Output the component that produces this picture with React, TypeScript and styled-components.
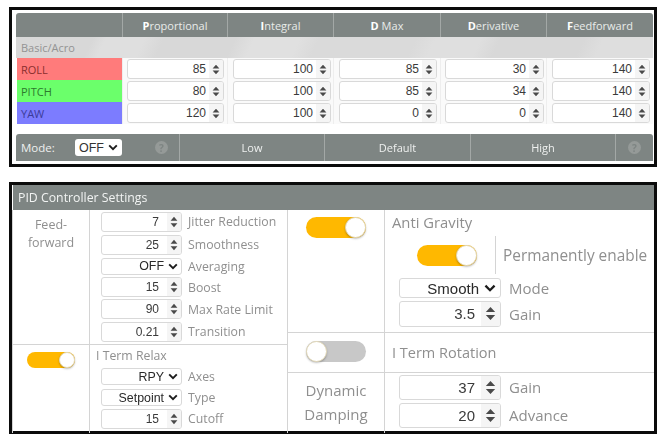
import React from "react";
import styled, { createGlobalStyle } from "styled-components";

const Global = createGlobalStyle`
  html, body { margin: 0; padding: 0; background: #fff; }
  body { width: 666px; height: 440px; overflow: hidden; font-family: "Open Sans", sans-serif; }
`;

const Page = styled.div`
  width: 666px;
  height: 440px;
  padding: 7px 9px 0 9px;
  box-sizing: border-box;
  display: flex;
  flex-direction: column;
  gap: 15px;
  filter: blur(0.3px);
`;

const TopFrame = styled.section`
  width: 648px;
  height: 160px;
  box-sizing: border-box;
  border: 3px solid #0b0b0b;
  padding: 3px 1px 3px 4px;
  background: #fff;
  display: flex;
  flex-direction: column;
`;

const PidGrid = styled.div`
  display: grid;
  grid-template-columns: 106px 105px 106px 107px 106px 107px;
  width: 637px;
  border-radius: 3px 3px 0 0;
  overflow: hidden;
`;

const HeadCell = styled.div`
  height: 24px;
  background: #7e8583;
  color: #e9ecea;
  font-size: 11px;
  display: flex;
  align-items: center;
  justify-content: center;
  border-left: 1px solid #a3a8a6;
  box-sizing: border-box;
  &:first-child { border-left: 0; }
  b { color: #fff; font-weight: 700; }
`;

const HeadRest = styled.span`
  white-space: pre;
`;

const GroupRow = styled.div`
  grid-column: 1 / -1;
  height: 21px;
  box-sizing: border-box;
  padding: 1px 0 0 5px;
  color: #939393;
  font-size: 11px;
  line-height: 19px;
  background: linear-gradient(115deg, #d8d8d8 0 12%, #dfdfdf 14% 20%, #d8d8d8 23% 34%, #e0e0e0 37% 44%, #dadada 47% 62%, #dfdfdf 65% 72%, #d8d8d8 75% 88%, #dedede 91%);
`;

const AxisCell = styled.div<{ $bg: string; $fg: string }>`
  height: 22px;
  margin-left: 1px;
  box-sizing: border-box;
  padding-left: 4px;
  display: flex;
  align-items: center;
  background: ${(p) => p.$bg};
  color: ${(p) => p.$fg};
  font-size: 11px;
`;

const ValueCell = styled.div<{ $l: number; $r: number }>`
  height: 22px;
  box-sizing: border-box;
  padding: 1px ${(p) => p.$r}px 1px ${(p) => p.$l}px;
  display: flex;
  align-items: center;
  border-left: 1px solid #eee;
  background: #fafafa;
`;

const NumberBox = styled.div<{ $h: number; $size: number }>`
  flex: 1;
  height: ${(p) => p.$h}px;
  box-sizing: border-box;
  background: #fff;
  border: 1px solid #d9d9d9;
  border-radius: 3px;
  display: flex;
  align-items: stretch;
  justify-content: flex-end;
  font-family: "Liberation Sans", Arial, sans-serif;
  font-size: ${(p) => p.$size}px;
  color: #3a3a3a;
`;

const NumberText = styled.span<{ $pad: number }>`
  align-self: center;
  padding-right: ${(p) => p.$pad}px;
`;

const Spinner = styled.span<{ $w: number }>`
  width: ${(p) => p.$w}px;
  background: #f5f5f5;
  display: flex;
  align-items: center;
  justify-content: center;
  border-radius: 0 2px 2px 0;
`;

type Kind = "table" | "small" | "big";

const numberKinds: Record<Kind, { h: number; size: number; pad: number; spin: number; aw: number; ah: number }> = {
  table: { h: 20, size: 12, pad: 3, spin: 14, aw: 8, ah: 11 },
  small: { h: 20, size: 12, pad: 8, spin: 14, aw: 8, ah: 12 },
  big: { h: 25, size: 15, pad: 6, spin: 19, aw: 11, ah: 15 },
};

const Num = ({ v, kind = "table", h }: { v: string; kind?: Kind; h?: number }) => {
  const k = numberKinds[kind];
  return (
    <NumberBox $h={h ?? k.h} $size={k.size}>
      <NumberText $pad={k.pad}>{v}</NumberText>
      <Spinner $w={k.spin}>
        <svg width={k.aw} height={k.ah} viewBox="0 0 8 11" preserveAspectRatio="none">
          <path d="M4 0.8 L7.4 4.4 H0.6 Z M4 10.2 L0.6 6.6 H7.4 Z" fill="#4a4a4a" />
        </svg>
      </Spinner>
    </NumberBox>
  );
};

const SelectBox = styled.div<{ $h: number; $big?: boolean }>`
  flex: 1;
  height: ${(p) => p.$h}px;
  box-sizing: border-box;
  background: #fff;
  border: 1px solid #d9d9d9;
  border-radius: 3px;
  display: flex;
  align-items: center;
  justify-content: flex-end;
  gap: ${(p) => (p.$big ? 5 : 4)}px;
  padding-right: ${(p) => (p.$big ? 4 : 3)}px;
  font-family: "Liberation Sans", Arial, sans-serif;
  font-size: ${(p) => (p.$big ? 15 : 12.4)}px;
  color: #2a2a2a;
`;

const Chevron = ({ w = 10 }: { w?: number }) => (
  <svg width={w} height={w * 0.7} viewBox="0 0 10 7">
    <path d="M1.2 1.4 L5 5.2 L8.8 1.4" fill="none" stroke="#1c1c1c" strokeWidth="1.9" />
  </svg>
);

const Sel = ({ v, h = 17, big }: { v: string; h?: number; big?: boolean }) => (
  <SelectBox $h={h} $big={big}>
    {v}
    <Chevron w={big ? 12 : 10} />
  </SelectBox>
);

const ModeBar = styled.div`
  margin-top: 10px;
  width: 637px;
  height: 27px;
  background: #7e8583;
  border-radius: 3px 3px 0 0;
  display: grid;
  grid-template-columns: 163px 145px 146px 145px 38px;
  color: #eef0ef;
  font-size: 11px;
`;

const ModeLead = styled.div`
  display: flex;
  align-items: center;
  padding-left: 5px;
`;

const ModeLabel = styled.span`
  width: 54px;
  font-size: 11.5px;
`;

const ModeSelect = styled.div`
  width: 47px;
  height: 17px;
  background: #fff;
  border-radius: 3px;
  display: flex;
  align-items: center;
  justify-content: center;
  gap: 4px;
  font-family: "Liberation Sans", Arial, sans-serif;
  font-size: 12.5px;
  color: #333;
`;

const ModeCell = styled.div`
  display: flex;
  align-items: center;
  justify-content: center;
  border-left: 1px solid #a3a8a6;
`;

const Help = styled.span`
  width: 13px;
  height: 13px;
  border-radius: 50%;
  background: #959a98;
  color: #7e8583;
  font-size: 10px;
  font-weight: 700;
  display: flex;
  align-items: center;
  justify-content: center;
`;

const HelpSlot = styled.span`
  margin-left: 33px;
  display: flex;
`;

const BottomFrame = styled.section`
  width: 648px;
  height: 252px;
  box-sizing: border-box;
  border: 3px solid #0b0b0b;
  padding: 0 0 0 1px;
  display: flex;
  flex-direction: column;
  background: #fff;
`;

const PanelTitle = styled.div`
  height: 25px;
  flex: none;
  background: #7e8583;
  color: #f2f4f3;
  font-size: 12.3px;
  line-height: 25px;
  padding-left: 5px;
`;

const Columns = styled.div`
  flex: 1;
  display: grid;
  grid-template-columns: 275px 1fr;
  min-height: 0;
`;

const Side = styled.div<{ $first?: boolean }>`
  display: flex;
  flex-direction: column;
  ${(p) => (p.$first ? "border-right: 1px solid #d4d4d4; border-left: 1px solid #d4d4d4; margin-left: -1px;" : "")}
`;

const Block = styled.div<{ $h: number; $left: number; $line?: boolean }>`
  height: ${(p) => p.$h}px;
  flex: none;
  box-sizing: border-box;
  display: grid;
  grid-template-columns: ${(p) => p.$left}px 1fr;
  border-bottom: ${(p) => (p.$line ? "1px solid #d4d4d4" : "0")};
`;

const Lead = styled.div<{ $size: number; $top: number; $lh: number }>`
  border-right: 1px solid #d4d4d4;
  color: #8f8f8f;
  font-size: ${(p) => p.$size}px;
  line-height: ${(p) => p.$lh}px;
  padding-top: ${(p) => p.$top}px;
  box-sizing: border-box;
  display: flex;
  flex-direction: column;
  align-items: center;
`;

const Stack = styled.div<{ $pad: number }>`
  display: flex;
  flex-direction: column;
  padding-left: ${(p) => p.$pad}px;
`;

const Row = styled.div<{ $h: number; $w: number; $gap: number; $size?: number; $indent?: number }>`
  height: ${(p) => p.$h}px;
  flex: none;
  display: flex;
  align-items: center;
  gap: ${(p) => p.$gap}px;
  margin-left: ${(p) => p.$indent ?? 0}px;
  color: #8f8f8f;
  font-size: ${(p) => p.$size ?? 12.3}px;
  & > :first-child { flex: 0 0 ${(p) => p.$w}px; }
`;

const Heading = styled.div<{ $size: number; $h: number }>`
  height: ${(p) => p.$h}px;
  line-height: ${(p) => p.$h}px;
  flex: none;
  color: #8f8f8f;
  font-size: ${(p) => p.$size}px;
`;

const Track = styled.span<{ $on: boolean; $w: number; $h: number }>`
  display: block;
  position: relative;
  flex: none;
  width: ${(p) => p.$w}px;
  height: ${(p) => p.$h}px;
  border-radius: ${(p) => p.$h / 2}px;
  background: ${(p) => (p.$on ? "#ffb800" : "#c8c8c8")};
`;

const Knob = styled.span<{ $on: boolean; $h: number }>`
  position: absolute;
  top: 0;
  ${(p) => (p.$on ? "right: 0;" : "left: 0;")}
  width: ${(p) => p.$h}px;
  height: ${(p) => p.$h}px;
  box-sizing: border-box;
  border-radius: 50%;
  background: #fff;
  border: 1px solid #e3d9b8;
  box-shadow: 0 1px 2px rgba(0, 0, 0, 0.25);
`;

const Toggle = ({ on, w, h }: { on: boolean; w: number; h: number }) => (
  <Track $on={on} $w={w} $h={h}>
    <Knob $on={on} $h={h} />
  </Track>
);

const ToggleLead = styled.div<{ $top: number }>`
  border-right: 1px solid #d4d4d4;
  display: flex;
  justify-content: center;
  padding-top: ${(p) => p.$top}px;
`;

const PermRow = styled.div`
  height: 40px;
  margin-bottom: 2px;
  flex: none;
  display: flex;
  align-items: center;
  color: #8f8f8f;
  font-size: 15.4px;
  padding-left: 25px;
`;

const PermDivider = styled.span`
  width: 1px;
  height: 38px;
  background: #d4d4d4;
  margin: 0 7px 0 18px;
`;

const axes = [
  { name: "ROLL", bg: "#ff7b7b", fg: "#8a2e2e", vals: ["85", "100", "85", "30", "140"] },
  { name: "PITCH", bg: "#6bff6b", fg: "#2d7a2d", vals: ["80", "100", "85", "34", "140"] },
  { name: "YAW", bg: "#7c7cff", fg: "#3b3b99", vals: ["120", "100", "0", "0", "140"] },
];

const cellInsets = [
  [4, 3],
  [5, 2],
  [5, 3],
  [4, 2],
  [5, 3],
];

const heads: [string, string][] = [
  ["P", "roportional"],
  ["I", "ntegral"],
  ["D", " Max"],
  ["D", "erivative"],
  ["F", "eedforward"],
];

export default function App() {
  return (
    <>
      <Global />
      <Page>
        <TopFrame>
          <PidGrid>
            <HeadCell />
            {heads.map(([a, b], i) => (
              <HeadCell key={i}>
                <b>{a}</b>
                <HeadRest>{b}</HeadRest>
              </HeadCell>
            ))}
            <GroupRow>Basic/Acro</GroupRow>
            {axes.map((a) => (
              <React.Fragment key={a.name}>
                <AxisCell $bg={a.bg} $fg={a.fg}>{a.name}</AxisCell>
                {a.vals.map((v, i) => (
                  <ValueCell key={i} $l={cellInsets[i][0]} $r={cellInsets[i][1]}>
                    <Num v={v} />
                  </ValueCell>
                ))}
              </React.Fragment>
            ))}
          </PidGrid>
          <ModeBar>
            <ModeLead>
              <ModeLabel>Mode:</ModeLabel>
              <ModeSelect>
                OFF
                <Chevron />
              </ModeSelect>
              <HelpSlot>
                <Help>?</Help>
              </HelpSlot>
            </ModeLead>
            <ModeCell>Low</ModeCell>
            <ModeCell>Default</ModeCell>
            <ModeCell>High</ModeCell>
            <ModeCell>
              <Help>?</Help>
            </ModeCell>
          </ModeBar>
        </TopFrame>

        <BottomFrame>
          <PanelTitle>PID Controller Settings</PanelTitle>
          <Columns>
            <Side $first>
              <Block $h={135} $left={77} $line>
                <Lead $top={6} $lh={18} $size={12.5}>
                  <span>Feed-</span>
                  <span>forward</span>
                </Lead>
                <Stack $pad={11}>
                  <Row $h={23} $w={81} $gap={6}><Num v="7" kind="small" /><span>Jitter Reduction</span></Row>
                  <Row $h={23} $w={81} $gap={6}><Num v="25" kind="small" /><span>Smoothness</span></Row>
                  <Row $h={20} $w={81} $gap={6}><Sel v="OFF" /><span>Averaging</span></Row>
                  <Row $h={22} $w={81} $gap={6}><Num v="15" kind="small" /><span>Boost</span></Row>
                  <Row $h={22} $w={81} $gap={6}><Num v="90" kind="small" /><span>Max Rate Limit</span></Row>
                  <Row $h={23} $w={81} $gap={6}><Num v="0.21" kind="small" /><span>Transition</span></Row>
                </Stack>
              </Block>
              <Block $h={88} $left={77}>
                <ToggleLead $top={7}>
                  <Toggle on w={48} h={16} />
                </ToggleLead>
                <Stack $pad={6}>
                  <Heading $size={12.3} $h={21}>I Term Relax</Heading>
                  <Row $h={21} $w={81} $gap={6} $indent={5}><Sel v="RPY" /><span>Axes</span></Row>
                  <Row $h={21} $w={81} $gap={6} $indent={5}><Sel v="Setpoint" /><span>Type</span></Row>
                  <Row $h={21} $w={81} $gap={6} $indent={5}><Num v="15" kind="small" /><span>Cutoff</span></Row>
                </Stack>
              </Block>
            </Side>
            <Side>
              <Block $h={123} $left={97} $line>
                <ToggleLead $top={7}>
                  <Toggle on w={60} h={21} />
                </ToggleLead>
                <Stack $pad={7}>
                  <Heading $size={14.8} $h={25}>Anti Gravity</Heading>
                  <PermRow>
                    <Toggle on w={60} h={21} />
                    <PermDivider />
                    <span>Permanently enable</span>
                  </PermRow>
                  <Row $h={22} $w={102} $gap={8} $size={15} $indent={7}><Sel v="Smooth" h={20} big /><span>Mode</span></Row>
                  <Row $h={29} $w={102} $gap={8} $size={15} $indent={7}><Num v="3.5" kind="big" h={26} /><span>Gain</span></Row>
                </Stack>
              </Block>
              <Block $h={40} $left={97} $line>
                <ToggleLead $top={8}>
                  <Toggle on={false} w={60} h={21} />
                </ToggleLead>
                <Stack $pad={7}>
                  <Heading $size={14.5} $h={39}>I Term Rotation</Heading>
                </Stack>
              </Block>
              <Block $h={60} $left={97}>
                <Lead $top={5} $lh={24} $size={15}>
                  <span>Dynamic</span>
                  <span>Damping</span>
                </Lead>
                <Stack $pad={14}>
                  <Row $h={28} $w={102} $gap={8} $size={15}><Num v="37" kind="big" /><span>Gain</span></Row>
                  <Row $h={28} $w={102} $gap={8} $size={15}><Num v="20" kind="big" /><span>Advance</span></Row>
                </Stack>
              </Block>
            </Side>
          </Columns>
        </BottomFrame>
      </Page>
    </>
  );
}
